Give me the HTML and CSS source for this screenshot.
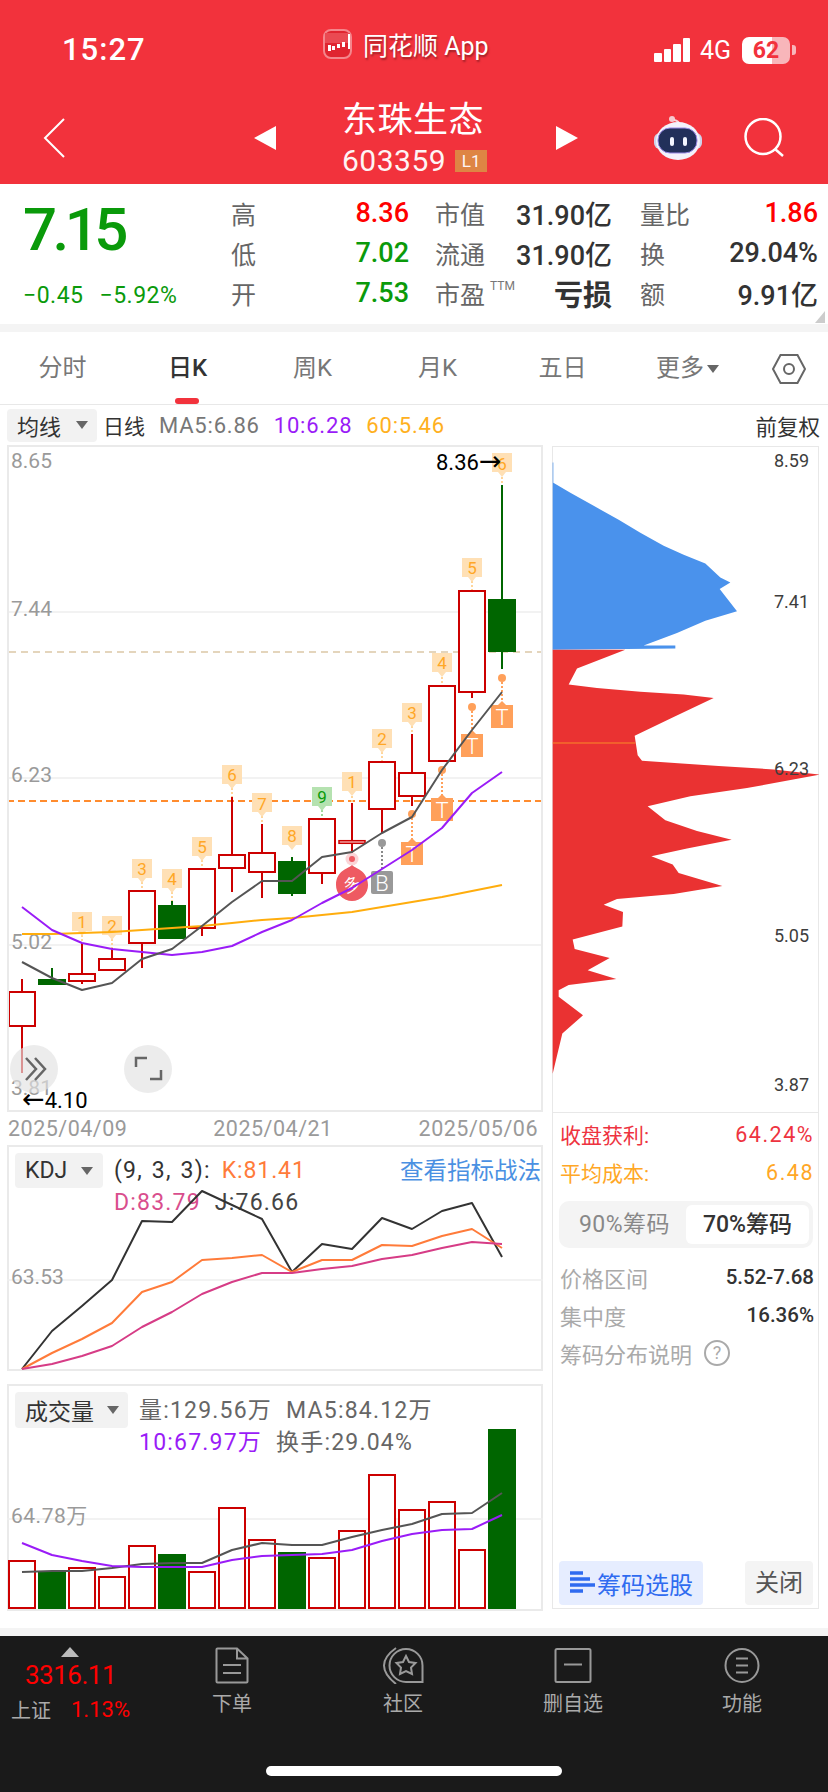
FILE: index.html
```html
<!DOCTYPE html>
<html lang="zh-CN">

<head>
    <meta charset="UTF-8">
    <meta name="viewport" content="width=device-width, initial-scale=1.0">
    <title>东珠生态 603359</title>
    <link rel="stylesheet" href="styles.css">
</head>

<body>
    <header class="top">
        <div class="status">
            <span class="time">15:27</span>
            <div class="app-name">
                <svg class="app-icon" width="29" height="30" viewBox="0 0 29 30">
                    <rect x="1" y="1" width="27" height="28" rx="7" fill="#e02530" stroke="#f4868c" stroke-width="2"/>
                    <path d="M2 4h25v10H2z" fill="#ea4a52"/>
                    <path d="M5 16h3v6H5zM9 17h3v4H9zM14 15h3v4h-3zM19 13h3v5h-3zM25 5h2v15h-2z" fill="#fff"/>
                </svg>
                <span>同花顺 App</span>
            </div>
            <div class="status-right">
                <span class="signal"><i></i><i></i><i></i><i></i></span>
                <span class="net">4G</span>
                <span class="battery">62</span>
                <span class="battery-nub"></span>
            </div>
        </div>
        <nav class="stock-nav">
            <svg class="nav-icon" width="22" height="40" viewBox="0 0 22 40">
                <path d="M21 1 2 20l19 19" fill="none" stroke="#fff" stroke-width="2"/>
            </svg>
            <span class="tri tri-left"></span>
            <div class="stock-title">
                <div class="stock-name">东珠生态</div>
                <div class="stock-code">603359<span class="level">L1</span></div>
            </div>
            <span class="tri tri-right"></span>
            <svg class="nav-icon" width="48" height="44" viewBox="0 0 48 44">
                <circle cx="18" cy="3" r="3" fill="#f6c9cf"/>
                <path d="M20 4q5 1 6 5" fill="none" stroke="#f6d5da" stroke-width="2"/>
                <rect x="0" y="17" width="48" height="16" rx="6" fill="#cfd3ea"/>
                <ellipse cx="24" cy="25" rx="22" ry="19" fill="#f3f2fb"/>
                <rect x="4" y="12" width="39" height="25" rx="12" fill="#22305a" stroke="#9a8ae6" stroke-width="1"/>
                <rect x="16" y="21" width="4" height="9" rx="2" fill="#f4f6ff"/>
                <rect x="29" y="21" width="4" height="9" rx="2" fill="#f4f6ff"/>
            </svg>
            <svg class="nav-icon" width="41" height="40" viewBox="0 0 41 40">
                <circle cx="19" cy="18.500" r="17.500" fill="none" stroke="#fff" stroke-width="2.500"/>
                <path d="m31 31 8 7" stroke="#fff" stroke-width="2.500"/>
            </svg>
        </nav>
    </header>

    <section class="quote">
        <div class="price-box">
            <div class="price">7.15</div>
            <div class="change"><span>−0.45</span><span>−5.92%</span></div>
        </div>
        <div class="quote-grid">
            <div class="cell"><span class="lbl">高</span><span class="num red">8.36</span></div>
            <div class="cell"><span class="lbl">市值</span><span class="num">31.90亿</span></div>
            <div class="cell"><span class="lbl">量比</span><span class="num red">1.86</span></div>
            <div class="cell"><span class="lbl">低</span><span class="num green">7.02</span></div>
            <div class="cell"><span class="lbl">流通</span><span class="num">31.90亿</span></div>
            <div class="cell"><span class="lbl">换</span><span class="num">29.04%</span></div>
            <div class="cell"><span class="lbl">开</span><span class="num green">7.53</span></div>
            <div class="cell"><span class="lbl">市盈<sup class="ttm">TTM</sup></span><span class="num strong">亏损</span></div>
            <div class="cell"><span class="lbl">额</span><span class="num">9.91亿</span></div>
        </div>
        <span class="corner"></span>
    </section>

    <div class="tabs">
        <div class="tab">分时</div>
        <div class="tab active">日K</div>
        <div class="tab">周K</div>
        <div class="tab">月K</div>
        <div class="tab">五日</div>
        <div class="tab">更多<span class="caret"></span></div>
        <svg class="hex" width="36" height="32" viewBox="0 0 36 32">
            <path d="M9.500 2h17L34 16l-7.500 14h-17L2 16z" fill="none" stroke="#666" stroke-width="2"/>
            <circle cx="18" cy="16" r="5" fill="none" stroke="#666" stroke-width="2"/>
        </svg>
    </div>

    <div class="ma-row">
        <div class="select select-ma">均线<span class="caret"></span></div>
        <span class="day">日线</span>
        <span class="ma-val ma5">MA5:6.86</span>
        <span class="ma-val ma10">10:6.28</span>
        <span class="ma-val ma60">60:5.46</span>
        <span class="fq">前复权</span>
    </div>

    <main class="board">
        <div class="left-col">
            <svg class="chart" width="536" height="667" viewBox="7 445 536 667">
                <path class="grid-line" d="M7 612h536M7 778h536M7 945h536"/>
                <path class="dash-tan" d="M9 652h534"/>
                <path class="dash-orange" d="M7 801h536"/>

                <text class="axis" x="11" y="468">8.65</text>
                <text class="axis" x="11" y="616">7.44</text>
                <text class="axis" x="11" y="782">6.23</text>
                <text class="axis" x="11" y="949">5.02</text>
                <text class="axis" x="11" y="1095">3.81</text>

                <path class="wick-up" d="M22 979v94M82 943v41M112 948v10M142 944v24M202 929v7M232 797v95M262 824v74M322 874v10M352 803v51M382 810v23M412 734v72M472 693v5"/>
                <path class="wick-down" d="M52 968v11M172 901v4M292 857v39M502 485v184"/>
                <rect class="up" x="9" y="992" width="26" height="34"/>
                <rect class="down" x="38" y="979" width="28" height="6"/>
                <rect class="up" x="69" y="974" width="26" height="7"/>
                <rect class="up" x="99" y="959" width="26" height="11"/>
                <rect class="up" x="129" y="891" width="26" height="52"/>
                <rect class="down" x="158" y="905" width="28" height="34"/>
                <rect class="up" x="189" y="869" width="26" height="59"/>
                <rect class="up" x="219" y="855" width="26" height="13"/>
                <rect class="up" x="249" y="853" width="26" height="19"/>
                <rect class="down" x="278" y="861" width="28" height="33"/>
                <rect class="up" x="309" y="819" width="26" height="54"/>
                <rect class="up thin" x="339" y="840.700" width="26" height="2.600"/>
                <rect class="up" x="369" y="762" width="26" height="47"/>
                <rect class="up" x="399" y="773" width="26" height="23"/>
                <rect class="up" x="429" y="686" width="26" height="75"/>
                <rect class="up" x="459" y="591" width="26" height="101"/>
                <rect class="down" x="488" y="599" width="28" height="53"/>

                <!-- T+ sequence tags above the candles -->
                <path class="tag-dots" d="M82 935v8M112 939v9M142 882v8M172 892v9M202 860v8M232 788v9M262 816v8M352 796v7M382 752v9M412 726v8M442 677v8M472 581v9M502 477v8"/>
                <path class="tag-dots-green" d="M322 810v8"/>
                <path class="tag" d="M72 912h20v19h-6l-4 5-4-5h-6zM102 916h20v19h-6l-4 5-4-5h-6zM132 859h20v19h-6l-4 5-4-5h-6zM162 869h20v19h-6l-4 5-4-5h-6zM192 837h20v19h-6l-4 5-4-5h-6zM222 765h20v19h-6l-4 5-4-5h-6zM252 793h20v19h-6l-4 5-4-5h-6zM282 826h20v19h-6l-4 5-4-5h-6zM342 772h20v19h-6l-4 5-4-5h-6zM372 729h20v19h-6l-4 5-4-5h-6zM402 703h20v19h-6l-4 5-4-5h-6zM432 653h20v19h-6l-4 5-4-5h-6zM462 558h20v19h-6l-4 5-4-5h-6zM492 453h20v19h-6l-4 5-4-5h-6z"/>
                <path class="tag-green" d="M312 787h20v19h-6l-4 5-4-5h-6z"/>
                <g class="tag-text">
                    <text x="82" y="928">1</text>
                    <text x="112" y="932">2</text>
                    <text x="142" y="875">3</text>
                    <text x="172" y="885">4</text>
                    <text x="202" y="853">5</text>
                    <text x="232" y="781">6</text>
                    <text x="262" y="810">7</text>
                    <text x="292" y="842">8</text>
                    <text x="322" y="803" class="tag-text-green">9</text>
                    <text x="352" y="788">1</text>
                    <text x="382" y="745">2</text>
                    <text x="412" y="719">3</text>
                    <text x="442" y="669">4</text>
                    <text x="472" y="574">5</text>
                    <text x="502" y="470">6</text>
                </g>

                <text class="peak" x="436" y="470">8.36<tspan class="arrow">→</tspan></text>

                <!-- buy / sell markers under the candles -->
                <path class="mark-line" d="M502 682v23M472 711v23M442 774v24M412 818v24"/>
                <path class="mark-line-gray" d="M382 847v24"/>
                <g class="mark-t">
                    <circle cx="502" cy="678" r="4"/><circle cx="472" cy="707" r="4"/>
                    <circle cx="442" cy="770" r="4"/><circle cx="412" cy="814" r="4"/>
                    <path d="M491 705h7l4-4 4 4h7v23h-22zM461 734h7l4-4 4 4h7v23h-22zM431 798h7l4-4 4 4h7v23h-22zM401 842h7l4-4 4 4h7v23h-22z"/>
                </g>
                <circle cx="382" cy="843" r="4" class="mark-b"/>
                <rect class="mark-b" x="371" y="871" width="22" height="23" rx="2"/>
                <g class="mark-letter">
                    <text x="502" y="725">T</text>
                    <text x="472" y="754">T</text>
                    <text x="442" y="818">T</text>
                    <text x="412" y="862">T</text>
                    <text x="382" y="891">B</text>
                </g>
                <circle cx="352" cy="859" r="6.500" class="mark-ring"/>
                <circle cx="352" cy="859" r="3" class="mark-duo"/>
                <path class="mark-duo" d="M352 865c2 3 16 5 16 20a16 16 0 0 1-32 0c0-15 14-17 16-20z"/>
                <text class="duo-text" x="352" y="891" transform="rotate(-18 352 885)">多</text>

                <polyline class="line line-ma60" points="22,934 52,934 82,933 112,932 142,930 172,928 202,926 232,923 262,920 292,918 322,915 352,912 382,907 412,902 442,897 472,891 502,885"/>
                <polyline class="line line-ma10" points="22,907 52,930 82,943 112,949 142,952 172,955 202,952 232,946 262,932 292,920 322,903 352,888 382,869 412,850 442,828 472,793 502,772"/>
                <polyline class="line line-ma5" points="22,962 52,978 82,990 112,983 142,959 172,949 202,926 232,902 262,881 292,881 322,857 352,852 382,833 412,817 442,770 472,730 502,692"/>

                <circle class="round-btn" cx="34" cy="1069" r="24"/>
                <circle class="round-btn" cx="148" cy="1069" r="24"/>
                <path class="round-icon" d="M26 1058l10 11-10 11M35 1058l10 11-10 11M136 1067v-9h11M161 1070v9h-11"/>
                <text class="peak" x="22" y="1108"><tspan class="arrow">←</tspan>4.10</text>
            </svg>

            <div class="dates"><span>2025/04/09</span><span>2025/04/21</span><span>2025/05/06</span></div>

            <div class="sub-chart kdj">
                <div class="select select-kdj">KDJ<span class="caret"></span></div>
                <div class="sub-info">
                    <div class="info-row">
                        <span class="params">(9, 3, 3):</span><span class="k">K:81.41</span>
                        <span class="strategy">查看指标战法</span>
                    </div>
                    <div class="info-row">
                        <span class="d">D:83.79</span><span class="j">J:76.66</span>
                    </div>
                </div>
                <svg class="sub-svg" width="536" height="226" viewBox="7 1145 536 226">
                    <path class="grid-line" d="M7 1280h536"/>
                    <text class="axis" x="11" y="1284">63.53</text>
                    <polyline class="line line-j" points="22,1369 52,1331 82,1306 112,1280 142,1221 172,1222 202,1191 232,1205 262,1219 292,1272 322,1244 352,1249 382,1218 412,1229 442,1211 472,1203 502,1257"/>
                    <polyline class="line line-k" points="22,1369 52,1353 82,1339 112,1323 142,1292 172,1282 202,1260 232,1258 262,1255 292,1272 322,1260 352,1260 382,1245 412,1246 442,1236 472,1229 502,1248"/>
                    <polyline class="line line-d" points="22,1369 52,1364 82,1356 112,1346 142,1327 172,1312 202,1294 232,1282 262,1273 292,1273 322,1269 352,1266 382,1259 412,1255 442,1248 472,1242 502,1244"/>
                </svg>
            </div>

            <div class="sub-chart vol">
                <div class="select select-vol">成交量<span class="caret"></span></div>
                <div class="sub-info">
                    <div class="info-row gray">
                        <span>量:129.56万</span><span>MA5:84.12万</span>
                    </div>
                    <div class="info-row gray">
                        <span class="purple">10:67.97万</span><span>换手:29.04%</span>
                    </div>
                </div>
                <svg class="sub-svg" width="536" height="227" viewBox="7 1384 536 227">
                    <path class="grid-line" d="M7 1519h536"/>
                    <text class="axis axis-wide" x="11" y="1523">64.78万</text>
                    <rect class="up" x="9" y="1561" width="26" height="47"/>
                    <rect class="down" x="38" y="1572" width="28" height="37"/>
                    <rect class="up" x="69" y="1568" width="26" height="40"/>
                    <rect class="up" x="99" y="1577" width="26" height="31"/>
                    <rect class="up" x="129" y="1546" width="26" height="62"/>
                    <rect class="down" x="158" y="1554" width="28" height="55"/>
                    <rect class="up" x="189" y="1572" width="26" height="36"/>
                    <rect class="up" x="219" y="1508" width="26" height="100"/>
                    <rect class="up" x="249" y="1540" width="26" height="68"/>
                    <rect class="down" x="278" y="1552" width="28" height="57"/>
                    <rect class="up" x="309" y="1558" width="26" height="50"/>
                    <rect class="up" x="339" y="1531" width="26" height="77"/>
                    <rect class="up" x="369" y="1475" width="26" height="133"/>
                    <rect class="up" x="399" y="1510" width="26" height="98"/>
                    <rect class="up" x="429" y="1502" width="26" height="106"/>
                    <rect class="up" x="459" y="1550" width="26" height="58"/>
                    <rect class="down" x="488" y="1429" width="28" height="180"/>
                    <polyline class="line line-ma5" points="22,1572 52,1571 82,1571 112,1568 142,1564 172,1563 202,1563 232,1550 262,1543 292,1545 322,1545 352,1537 382,1530 412,1524 442,1514 472,1513 502,1493"/>
                    <polyline class="line line-ma10" points="22,1543 52,1555 82,1561 112,1566 142,1567 172,1567 202,1567 232,1560 262,1556 292,1555 322,1554 352,1550 382,1541 412,1534 442,1530 472,1529 502,1515"/>
                </svg>
            </div>
        </div>

        <aside class="chips">
            <svg class="chip-chart" width="267" height="666" viewBox="552 446 267 666">
                <svg x="552" y="446" width="267" height="666" viewBox="35 37 801 1536" preserveAspectRatio="none">
                    <polygon class="chip-blue" points="37,75 39,75 39,122 90,145 160,175 235,207 300,237 370,267 430,288 495,308 540,340 570,352 538,367 590,418 495,440 410,468 310,497 405,497 405,504 37,507"/>
                    <polygon class="chip-red" points="37,507 255,507 110,550 85,587 170,595 300,604 430,610 520,618 400,662 283,705 292,750 305,763 535,775 700,783 838,795 620,826 450,845 322,868 375,900 470,925 574,945 440,965 333,983 397,1002 415,1022 546,1052 400,1070 230,1082 190,1095 248,1112 246,1145 97,1175 103,1197 208,1218 142,1246 228,1266 85,1280 55,1292 55,1307 128,1350 66,1392 37,1485"/>
                    <path class="chip-avg" d="M37 722h248"/>
                </svg>
                <text class="chip-axis" x="774" y="467">8.59</text>
                <text class="chip-axis" x="774" y="608">7.41</text>
                <text class="chip-axis" x="774" y="775">6.23</text>
                <text class="chip-axis" x="774" y="942">5.05</text>
                <text class="chip-axis" x="774" y="1091">3.87</text>
            </svg>
            <div class="chip-info">
                <div class="chip-row profit"><span>收盘获利:</span><span class="chip-val">64.24%</span></div>
                <div class="chip-row cost"><span>平均成本:</span><span class="chip-val">6.48</span></div>
                <div class="toggle">
                    <span>90%筹码</span>
                    <span class="on">70%筹码</span>
                </div>
                <div class="chip-row detail"><span>价格区间</span><b>5.52-7.68</b></div>
                <div class="chip-row detail"><span>集中度</span><b>16.36%</b></div>
                <div class="chip-row detail explain"><span>筹码分布说明</span><i class="help">?</i></div>
                <div class="chip-btns">
                    <div class="btn-pick">
                        <svg width="25" height="24" viewBox="0 0 25 24">
                            <path d="M0 2h13M0 8h20M0 14h25M0 20h13" stroke="#2f6bf0" stroke-width="3.500"/>
                        </svg>
                        筹码选股
                    </div>
                    <div class="btn-close">关闭</div>
                </div>
            </div>
        </aside>
    </main>

    <footer class="bottom">
        <div class="bottom-bar">
            <div class="index-box">
                <span class="index-up"></span>
                <div class="index-val">3316.11</div>
                <div class="index-row"><span>上证</span><span class="index-pct">1.13%</span></div>
            </div>
            <div class="foot-tab">
                <svg width="34" height="37" viewBox="0 0 34 37" class="foot-icon">
                    <path d="M1.500 2.500a1 1 0 0 1 1-1H22l10.500 10v23a1 1 0 0 1-1 1h-29a1 1 0 0 1-1-1zM22 1.500v10h10.500M8 18h18M8 26h18"/>
                </svg>
                下单
            </div>
            <div class="foot-tab">
                <svg width="41" height="37" viewBox="0 0 41 37" class="foot-icon">
                    <path d="M13 1Q-11 18 13 37M39.500 35H23A16.500 16.500 0 1 1 39.500 18.500z"/>
                    <path d="m23 9 3 6 6.500 1-4.500 4.500 1 6.500-6-3-6 3 1-6.500-4.500-4.500 6.500-1z"/>
                </svg>
                社区
            </div>
            <div class="foot-tab">
                <svg width="38" height="36" viewBox="0 0 38 36" class="foot-icon">
                    <rect x="1.500" y="1.500" width="35" height="33" rx="1.500"/>
                    <path d="M10 17h18"/>
                </svg>
                删自选
            </div>
            <div class="foot-tab">
                <svg width="36" height="36" viewBox="0 0 36 36" class="foot-icon">
                    <circle cx="18" cy="18" r="16.500"/>
                    <path d="M12 11h12M12 18h12M12 25h12"/>
                </svg>
                功能
            </div>
        </div>
        <div class="home-bar"></div>
    </footer>
</body>

</html>
```

FILE: styles.css
```css
* {
    box-sizing: border-box;
}

body {
    font-family: Roboto, 'Noto Sans CJK SC', sans-serif;
    margin: 0;
    width: 828px;
    height: 1792px;
    overflow: hidden;
    background-color: #fff;
    color: #333;
}

svg {
    display: block;
}

/* header */
.top {
    height: 184px;
    background-color: #f2323c;
    color: #fff;
}

.status {
    display: grid;
    grid-template-columns: 261px 330px 1fr;
    align-items: center;
    height: 96px;
    padding-left: 62px;
}

.time {
    font-size: 31px;
    font-weight: 500;
    letter-spacing: 1px;
    position: relative;
    top: 1px;
}

.app-name {
    display: flex;
    align-items: center;
    gap: 11px;
    font-size: 25px;
    text-shadow: 1px 2px 2px rgba(0, 0, 0, 0.35);
    position: relative;
    top: -4px;
}

.status-right {
    display: flex;
    align-items: center;
    font-size: 25px;
    position: relative;
    top: 2px;
}

.signal {
    display: flex;
    align-items: flex-end;
    gap: 2px;
    height: 24px;
    margin-left: 1px;
}

.signal i {
    display: block;
    width: 7.500px;
    background-color: #fff;
    border-radius: 1px;
}

.signal i:nth-child(1) { height: 9px; }
.signal i:nth-child(2) { height: 13px; }
.signal i:nth-child(3) { height: 18px; }
.signal i:nth-child(4) { height: 24px; }

.net {
    margin-left: 10px;
    width: 42px;
}

.battery {
    width: 48px;
    height: 27px;
    border-radius: 7px;
    background: linear-gradient(to right, #fff 62%, #f8b6ba 62%);
    color: #f2323c;
    font-weight: 700;
    font-size: 23px;
    line-height: 27px;
    text-align: center;
}

.battery-nub {
    width: 4px;
    height: 10px;
    margin-left: 2px;
    background-color: #f8b6ba;
    border-radius: 0 3px 3px 0;
}

.stock-nav {
    display: grid;
    grid-template-columns: 211px 89px 213px 98px 90px auto;
    align-items: center;
    height: 88px;
    padding-left: 43px;
}

.nav-icon,
.tri {
    margin-top: -4px;
}

.tri {
    width: 0;
    height: 0;
    border-top: 12.500px solid transparent;
    border-bottom: 12.500px solid transparent;
}

.tri-left {
    border-right: 22px solid #fff;
}

.tri-right {
    border-left: 22px solid #fff;
}

.stock-title {
    margin: -2px 0 0 -1px;
}

.stock-name {
    font-size: 35px;
    line-height: 44px;
    letter-spacing: 0.5px;
}

.stock-code {
    display: flex;
    align-items: center;
    font-size: 30px;
    line-height: 36px;
    letter-spacing: 0.5px;
    opacity: 0.95;
}

.level {
    width: 32px;
    height: 22px;
    margin-left: 9px;
    background-color: #dd8a45;
    font-size: 17px;
    line-height: 22px;
    letter-spacing: 0;
    text-align: center;
}

/* quote */
.quote {
    position: relative;
    display: flex;
    height: 140px;
    padding-left: 23px;
}

.price-box {
    width: 208px;
    color: #0a9a0a;
}

.price {
    font-size: 60px;
    font-weight: 500;
    letter-spacing: -4.500px;
    line-height: 70px;
    margin-top: 11px;
}

.change {
    display: flex;
    gap: 16px;
    font-size: 23px;
    letter-spacing: 0.5px;
    margin-top: 17px;
    line-height: 28px;
}

.quote-grid {
    display: grid;
    grid-template-columns: 204px 205px 178px;
    grid-auto-rows: 40px;
    padding-top: 9px;
}

.cell {
    display: flex;
    justify-content: space-between;
    align-items: center;
}

.cell:nth-child(3n+1) {
    padding-right: 26px;
}

.cell:nth-child(3n+2) {
    padding-right: 28px;
}

.lbl {
    font-size: 25px;
    color: #666;
}

.num {
    font-size: 27px;
    font-weight: 500;
    color: #333;
}

.num.red {
    color: #f00;
}

.num.green {
    color: #0a9a0a;
}

.num.strong {
    font-size: 29px;
    font-weight: 700;
}

.ttm {
    font-size: 12px;
    line-height: 0;
    vertical-align: 14px;
    margin-left: 5px;
    color: #777;
}

.corner {
    position: absolute;
    right: 3px;
    bottom: 1px;
    width: 10px;
    height: 12px;
    background-color: #ccc;
    clip-path: polygon(100% 0, 100% 100%, 0 100%);
}

/* period tabs */
.tabs {
    display: grid;
    grid-template-columns: repeat(6, 125px) 1fr;
    align-items: center;
    height: 81px;
    padding-top: 8px;
    border-top: 8px solid #f4f4f4;
    border-bottom: 1px solid #e8e8e8;
}

.tab {
    position: relative;
    height: 64px;
    line-height: 56px;
    text-align: center;
    font-size: 24px;
    color: #777;
}

.tab.active {
    color: #333;
    font-weight: 500;
}

.tab.active::after {
    content: '';
    position: absolute;
    left: 50px;
    bottom: 0;
    width: 24px;
    height: 6px;
    border-radius: 3px;
    background-color: #f2323c;
}

.hex {
    margin: -7px 0 0 21px;
}

.caret {
    display: inline-block;
    width: 0;
    height: 0;
    margin-left: 3px;
    vertical-align: 3px;
    border-left: 6.500px solid transparent;
    border-right: 6.500px solid transparent;
    border-top: 8px solid #666;
}

/* MA legend */
.ma-row {
    display: flex;
    align-items: center;
    height: 40px;
    padding: 0 8px 0 7px;
    font-size: 21px;
}

.ma-val {
    font-size: 22px;
    letter-spacing: 0.8px;
    margin-right: 14px;
}

.select {
    display: flex;
    align-items: center;
    justify-content: space-between;
    background-color: #f2f2f2;
    border-radius: 4px;
    color: #333;
    font-size: 22px;
}

.select-ma {
    width: 90px;
    height: 33px;
    padding: 0 9px 0 10px;
    margin-right: 6px;
}

.day {
    color: #333;
    margin-right: 14px;
}

.ma5 {
    color: #777;
}

.ma10 {
    color: #9a1cf7;
}

.ma60 {
    color: #ffb020;
    margin-right: 0;
}

.fq {
    margin-left: auto;
    color: #333;
    font-size: 21.500px;
}

/* charts */
.board {
    display: grid;
    grid-template-columns: 536px 267px;
    column-gap: 9px;
    height: 1183px;
    padding-left: 7px;
}

.left-col {
    display: flex;
    flex-direction: column;
}

.chart {
    outline: 2px solid #eaeaea;
    outline-offset: -2px;
    flex: none;
}

.grid-line {
    stroke: #eee;
    stroke-width: 1.500;
    fill: none;
}

.dash-tan {
    stroke: #dcc8a6;
    stroke-width: 1.500;
    stroke-dasharray: 7 5;
}

.dash-orange {
    stroke: #ff8c2e;
    stroke-width: 2;
    stroke-dasharray: 7 4;
}

.axis {
    fill: #9a9a9a;
    font-size: 21px;
}

.axis-wide {
    letter-spacing: 0.5px;
}

.up {
    fill: #fff;
    stroke: #c00;
    stroke-width: 2;
}

.up.thin {
    fill: #fbd5d5;
    stroke-width: 1.500;
}

.down {
    fill: #060;
}

.wick-up {
    stroke: #c00;
    stroke-width: 2;
}

.wick-down {
    stroke: #060;
    stroke-width: 2;
}

.tag {
    fill: #ffe0b5;
}

.tag-green {
    fill: #b5e2b0;
}

.tag-dots,
.tag-dots-green,
.mark-line,
.mark-line-gray {
    stroke-width: 2;
    stroke-dasharray: 2 2;
    fill: none;
}

.tag-dots {
    stroke: #ffd59a;
}

.tag-dots-green {
    stroke: #9ed69a;
}

.mark-line {
    stroke: #ffa05a;
}

.mark-line-gray {
    stroke: #888;
}

.tag-text text {
    fill: #ffa726;
    font-size: 17px;
    text-anchor: middle;
}

.tag-text .tag-text-green {
    fill: #0a9a0a;
}

.peak {
    fill: #000;
    font-size: 22px;
}

.arrow {
    font-family: 'DejaVu Sans', sans-serif;
    font-size: 27px;
}

.mark-t {
    fill: #ffa05a;
}

.mark-b {
    fill: #999;
}

.mark-duo {
    fill: #ee5a62;
}

.mark-ring {
    fill: #fbd5d8;
}

.mark-letter text {
    fill: #fff;
    font-size: 22px;
    font-weight: 300;
    text-anchor: middle;
}

.duo-text {
    fill: #fff;
    font-size: 17px;
    text-anchor: middle;
}

.line {
    fill: none;
    stroke-width: 2;
    stroke-linejoin: round;
}

.line-ma5 {
    stroke: #555;
}

.line-ma10 {
    stroke: #9a1cf7;
}

.line-ma60 {
    stroke: #ffad0d;
}

.line-j {
    stroke: #333;
}

.line-k {
    stroke: #ff7b3a;
}

.line-d {
    stroke: #d63c86;
}

.round-btn {
    fill: #e2e2e2;
    fill-opacity: 0.65;
}

.round-icon {
    fill: none;
    stroke: #666;
    stroke-width: 2.500;
}

.dates {
    display: flex;
    justify-content: space-between;
    height: 33px;
    padding: 0 5px 0 1px;
    font-size: 21.500px;
    line-height: 33px;
    color: #9a9a9a;
    letter-spacing: 0.5px;
}

.sub-chart {
    position: relative;
    display: flex;
    outline: 2px solid #eaeaea;
    outline-offset: -2px;
    padding-left: 8px;
}

.kdj {
    height: 226px;
    padding-top: 8px;
    margin-bottom: 13px;
}

.vol {
    height: 227px;
    padding-top: 8px;
}

.sub-svg {
    position: absolute;
    left: 0;
    top: 0;
}

.select-kdj {
    width: 88px;
    height: 35px;
    padding: 0 10px;
    font-size: 23px;
    margin-right: 11px;
}

.select-vol {
    width: 113px;
    height: 36px;
    padding: 0 9px 0 10px;
    font-size: 23px;
    margin-right: 11px;
}

.sub-info {
    flex: 1;
    padding-top: 2px;
    padding-right: 2px;
    font-size: 23px;
    letter-spacing: 1.200px;
}

.vol .sub-info {
    padding-top: 3px;
}

.info-row {
    display: flex;
    gap: 14px;
    height: 32px;
    line-height: 32px;
    white-space: nowrap;
}

.info-row.gray {
    color: #666;
}

.params {
    word-spacing: 2px;
}

.k {
    color: #ff7b3a;
    margin-left: -3px;
    letter-spacing: 0.9px;
}

.d {
    color: #d94e8d;
}

.j {
    color: #444;
}

.purple {
    color: #9a1cf7;
}

.strategy {
    margin-left: auto;
    color: #4a90e2;
    font-size: 23.500px;
    letter-spacing: 0;
}

/* chip distribution */
.chips {
    display: flex;
    flex-direction: column;
    height: 1163px;
    margin-top: 1px;
    border: 1px solid #e8e8e8;
    width: 267px;
}

.chip-chart {
    flex: none;
    margin: -1px 0 0 -1px;
}

.chip-blue {
    fill: #4a92ec;
}

.chip-red {
    fill: #ea3232;
}

.chip-avg {
    stroke: #ffa726;
    stroke-width: 2;
}

.chip-axis {
    fill: #3d3d3d;
    font-size: 18px;
}

.chip-info {
    flex: 1;
    display: flex;
    flex-direction: column;
    padding: 2px 5px 3px 6px;
    border-top: 1px solid #e8e8e8;
}

.chip-row {
    display: flex;
    justify-content: space-between;
    align-items: center;
    height: 38px;
    padding: 0 1px;
    font-size: 21px;
}

.chip-val {
    letter-spacing: 1.500px;
    font-size: 21.500px;
    margin-right: -2px;
}

.profit {
    color: #ee3340;
}

.cost {
    color: #ffa726;
}

.toggle {
    display: grid;
    grid-template-columns: 123px 123px;
    height: 47px;
    margin: 10px 0 10px;
    padding: 4px;
    background-color: #f4f4f4;
    border-radius: 10px;
    font-size: 23px;
    letter-spacing: 0.5px;
    line-height: 39px;
    text-align: center;
    color: #888;
    white-space: nowrap;
}

.toggle .on {
    background-color: #fff;
    color: #333;
    border-radius: 6px;
    font-weight: 500;
    letter-spacing: 0;
}

.detail {
    color: #aaa;
    font-size: 22px;
}

.detail b {
    color: #333;
    font-size: 20.500px;
    font-weight: 500;
    margin-right: -2px;
}

.explain {
    justify-content: flex-start;
    gap: 12px;
}

.help {
    width: 26px;
    height: 26px;
    border: 2px solid #aaa;
    border-radius: 50%;
    font-size: 18px;
    font-style: normal;
    line-height: 22px;
    text-align: center;
}

.chip-btns {
    display: flex;
    justify-content: space-between;
    margin-top: auto;
}

.btn-pick {
    display: flex;
    align-items: center;
    gap: 2px;
    width: 144px;
    height: 44px;
    padding-left: 11px;
    background-color: #e6edff;
    border-radius: 4px;
    color: #2f6bf0;
    font-size: 24px;
}

.btn-close {
    width: 68px;
    height: 44px;
    background-color: #f4f4f4;
    border-radius: 4px;
    font-size: 24px;
    line-height: 44px;
    text-align: center;
    color: #555;
}

/* bottom bar */
.bottom {
    height: 164px;
    border-top: 8px solid #f4f4f4;
    background-color: #1a1a1a;
}

.bottom-bar {
    display: grid;
    grid-template-columns: 147px 170px 172px 168px 170px;
    height: 130px;
}

.index-box {
    position: relative;
    padding: 11px 0 0 11px;
}

.index-up {
    display: block;
    width: 0;
    height: 0;
    margin-left: 50px;
    border-left: 9px solid transparent;
    border-right: 9px solid transparent;
    border-bottom: 10px solid #bbb;
}

.index-val {
    margin: 3px 0 0 14px;
    color: #f00;
    font-size: 26px;
    line-height: 30px;
    letter-spacing: -0.5px;
}

.index-row {
    display: flex;
    align-items: center;
    gap: 20px;
    margin-top: 5px;
    color: #aaa;
    font-size: 20px;
    white-space: nowrap;
}

.index-pct {
    color: #f00;
    font-size: 22px;
}

.foot-tab {
    display: flex;
    flex-direction: column;
    align-items: center;
    padding-top: 11px;
    color: #aaa;
    font-size: 20px;
    line-height: 30px;
    gap: 5px;
}

.foot-icon {
    height: 37px;
    fill: none;
    stroke: #999;
    stroke-width: 2;
}

.home-bar {
    width: 296px;
    height: 10px;
    margin: 0 auto;
    border-radius: 5px;
    background-color: #fff;
}
```
